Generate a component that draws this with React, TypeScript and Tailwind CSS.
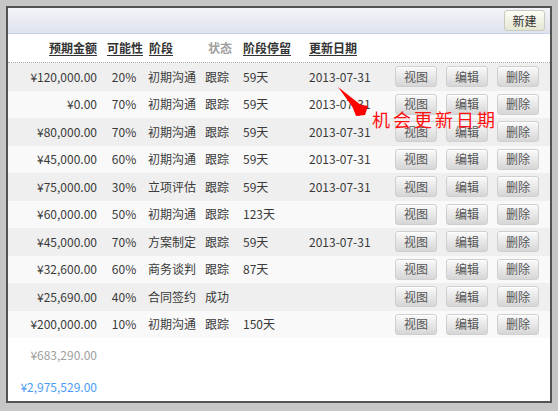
import React from "react";

const rows = [
  ["¥120,000.00", "20%", "初期沟通", "跟踪", "59天", "2013-07-31"],
  ["¥0.00", "70%", "初期沟通", "跟踪", "59天", "2013-07-31"],
  ["¥80,000.00", "70%", "初期沟通", "跟踪", "59天", "2013-07-31"],
  ["¥45,000.00", "60%", "初期沟通", "跟踪", "59天", "2013-07-31"],
  ["¥75,000.00", "30%", "立项评估", "跟踪", "59天", "2013-07-31"],
  ["¥60,000.00", "50%", "初期沟通", "跟踪", "123天", ""],
  ["¥45,000.00", "70%", "方案制定", "跟踪", "59天", "2013-07-31"],
  ["¥32,600.00", "60%", "商务谈判", "跟踪", "87天", ""],
  ["¥25,690.00", "40%", "合同签约", "成功", "", ""],
  ["¥200,000.00", "10%", "初期沟通", "跟踪", "150天", ""],
];

function Btn({ label }: { label: string }) {
  return (
    <button className="w-[42px] h-[21px] rounded-[3px] border border-[#cfcfcf] bg-gradient-to-b from-[#fafafa] to-[#d6d6d6] text-[12px] text-[#555] leading-none flex items-center justify-center shadow-[inset_0_1px_0_#fff]">
      {label}
    </button>
  );
}

export default function App() {
  const font = { fontFamily: '"Noto Sans CJK SC", "Noto Sans", sans-serif' };
  return (
    <div className="w-[558px] h-[411px] bg-[#c6c6c6] pt-[6px] pl-[6px] pr-[6px] pb-[8px]" style={font}>
      <div className="relative h-full border-2 border-[#525252] bg-white flex flex-col overflow-hidden text-[12px] text-[#3a3a3a]">
        {/* toolbar */}
        <div className="h-[26px] shrink-0 border-b border-[#c3d3ea] bg-gradient-to-b from-[#f3f4f8] to-[#dfe3ec] flex items-center justify-end pr-[5px]">
          <button className="w-[41px] h-[21px] rounded-[3px] border border-[#c9cac0] bg-gradient-to-b from-[#fdfdf6] to-[#e5e7d3] text-[12px] text-[#333] leading-none flex items-center justify-center">
            新建
          </button>
        </div>
        {/* header */}
        <div className="h-[29px] shrink-0 border-b border-dotted border-[#a8a8a8] flex items-center font-bold text-[#333]">
          <div className="w-[93px] text-right pr-[4px] underline underline-offset-2">预期金额</div>
          <div className="w-[46px] text-center pl-[2px] underline underline-offset-2">可能性</div>
          <div className="w-[57px] pl-[2px] underline underline-offset-2">阶段</div>
          <div className="w-[38px] pl-[4px] text-[#a0a0a0]">状态</div>
          <div className="w-[66px] pl-[1px] underline underline-offset-2">阶段停留</div>
          <div className="w-[86px] pl-[1px] underline underline-offset-2">更新日期</div>
        </div>
        {/* rows */}
        {rows.map((r, i) => (
          <div
            key={i}
            className={
              "h-[27.5px] shrink-0 flex items-center " +
              (i % 2 === 0 ? "bg-[#efefef]" : "bg-[#f9f9f9]")
            }
          >
            <div className="w-[93px] text-right pr-[4px]">{r[0]}</div>
            <div className="w-[46px] text-center">{r[1]}</div>
            <div className="w-[57px] pl-[1px]">{r[2]}</div>
            <div className="w-[38px] pl-[1px]">{r[3]}</div>
            <div className="w-[66px] pl-[1px]">{r[4]}</div>
            <div className="w-[86px] pl-[1px]">{r[5]}</div>
            <div className="flex gap-[9px] pl-[1px]">
              <Btn label="视图" />
              <Btn label="编辑" />
              <Btn label="删除" />
            </div>
          </div>
        ))}
        {/* totals */}
        <div className="h-[33px] shrink-0 flex items-center">
          <div className="w-[93px] text-right pr-[4px] text-[#a0a0a0]">¥683,290.00</div>
        </div>
        <div className="h-[32px] shrink-0 flex items-center">
          <div className="w-[93px] text-right pr-[4px] text-[#4a9cf6] whitespace-nowrap">¥2,975,529.00</div>
        </div>

        {/* annotation */}
        <svg className="absolute left-0 top-0 pointer-events-none" width="546" height="400">
          <polygon points="330,79 358,101 351,108" fill="#ff0000" />
          <polygon points="343,95 360,98 357,107 348,108" fill="#ff0000" />
        </svg>
        <div
          className="absolute left-[364px] top-[99px] text-[18px] leading-[24px] tracking-[3px] text-[#ff1010] whitespace-nowrap"
        >
          机会更新日期
        </div>
      </div>
    </div>
  );
}
